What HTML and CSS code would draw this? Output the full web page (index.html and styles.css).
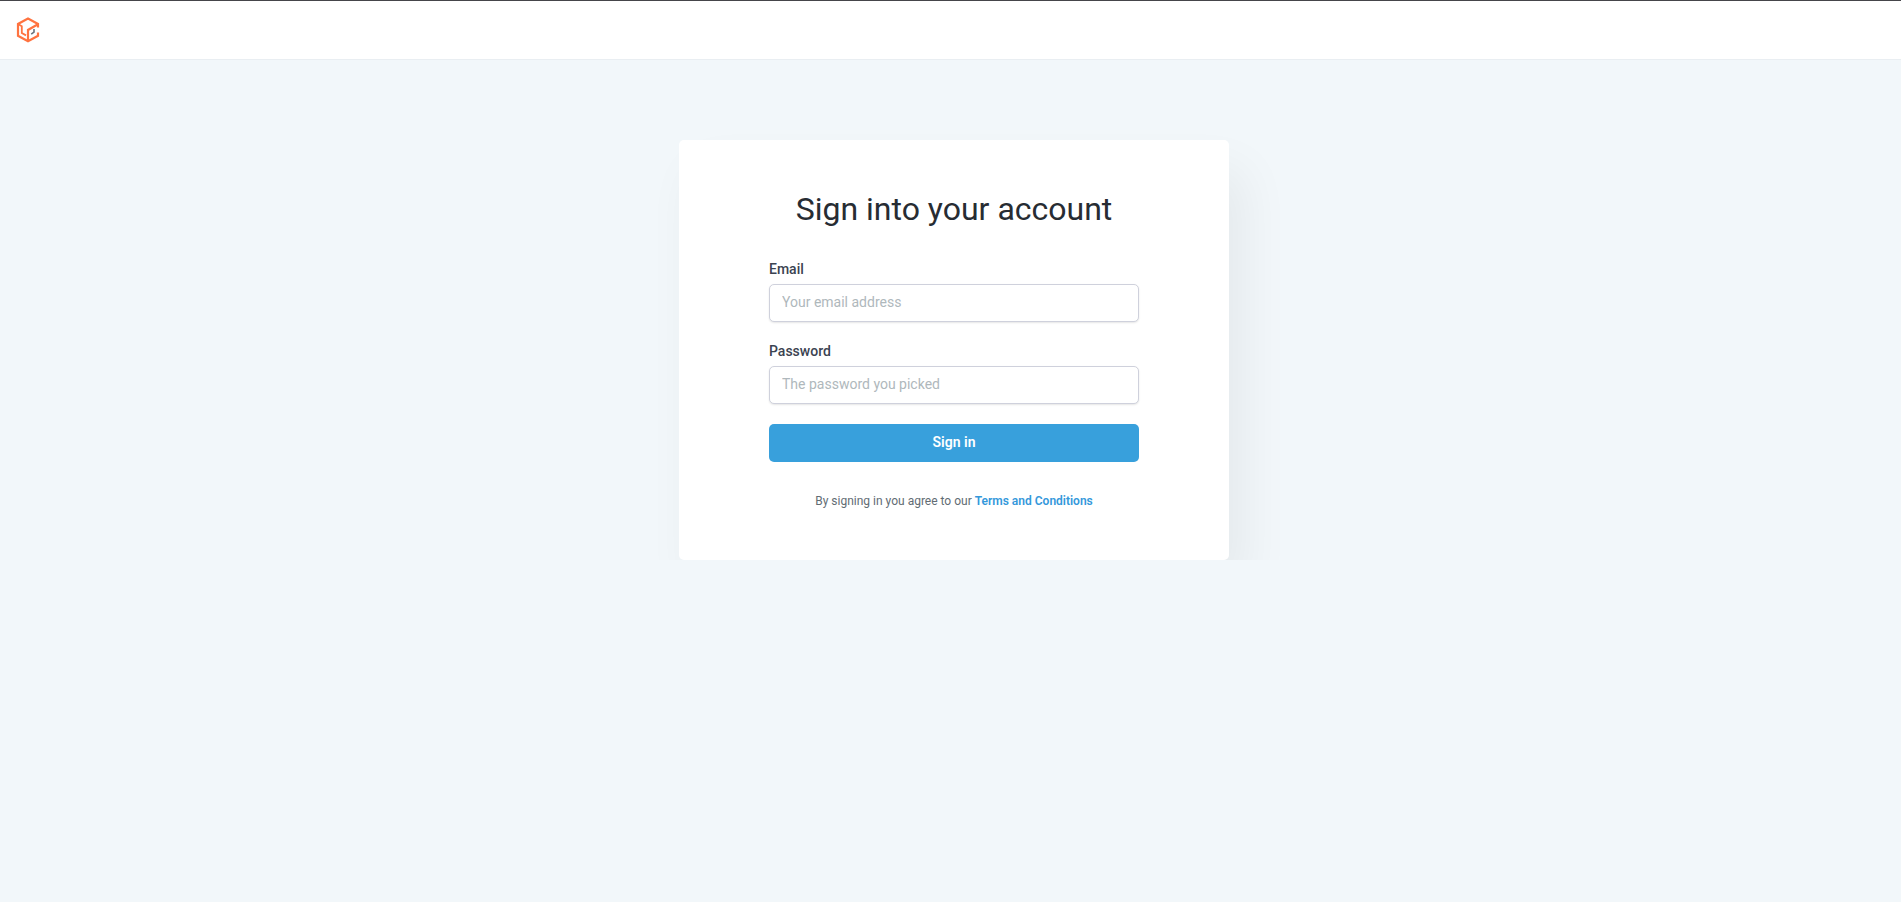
FILE: index.html
```
<!DOCTYPE html>
<html lang="en">
<head>
  <meta charset="UTF-8" />
  <meta name="viewport" content="width=device-width, initial-scale=1.0"/>
  <title>Sign in</title>
  <link rel="stylesheet" href="styles.css">
</head>
<body>
  <header class="navbar">
    <a href="#" class="logo" aria-label="Home">
      <svg width="24" height="28" viewBox="0 0 24 28" fill="none" stroke="#ff7340" stroke-width="2.2">
        <path d="M22 11.5V8L12 2.6L2 8V19.8L12 25.2L22 19.8V16.5" />
        <path d="M2 8L5.8 10.2V17L10 19.4" stroke-width="1.8" />
        <path d="M12 25V14L21.5 8.5" />
        <path d="M18 13V16.2L15.2 18.2" stroke="#6b747d" stroke-width="1.6" />
      </svg>
    </a>
  </header>

  <main class="page">
    <div class="card">
      <h1>Sign into your account</h1>
      <form>
        <div class="field">
          <label for="email">Email</label>
          <input type="email" id="email" placeholder="Your email address" />
        </div>
        <div class="field">
          <label for="password">Password</label>
          <input type="password" id="password" placeholder="The password you picked" />
        </div>
        <button type="submit">Sign in</button>
      </form>
      <p class="terms">By signing in you agree to our <a href="#">Terms and Conditions</a></p>
    </div>
  </main>
</body>
</html>
```

FILE: styles.css
```
* {
  box-sizing: border-box;
}

body {
  margin: 0;
  font-family: Roboto, sans-serif;
  font-size: 14px;
  line-height: 18px;
  color: #3b4351;
  background: #f2f7fa;
}

.navbar {
  display: flex;
  align-items: center;
  height: 60px;
  padding: 0 16px 1px;
  background: #fff;
  border-top: 1px solid #45454a;
  border-bottom: 1px solid #e9eef2;
}

.logo {
  display: flex;
}

/* clips the card shadow at the bottom */
.page {
  display: flex;
  justify-content: center;
  padding: 80px 0 0 7px;
  overflow: hidden;
}

.card {
  width: 100%;
  max-width: 550px;
  padding: 48px 90px 50px;
  background: #fff;
  border-radius: 5px;
  box-shadow: 15px 30px 50px rgba(0, 0, 0, 0.06);
}

h1 {
  margin: 0 0 30px;
  font-size: 32px;
  font-weight: 400;
  line-height: 42px;
  text-align: center;
  color: #272c33;
}

.field {
  margin-bottom: 20px;
}

label {
  display: block;
  margin-bottom: 6px;
  font-weight: 500;
}

input {
  display: block;
  width: 100%;
  height: 38px;
  padding: 8px 12px 10px;
  font: inherit;
  color: #3b4351;
  background: #fff;
  border: 1px solid #cfd1dc;
  border-radius: 5px;
  box-shadow: 0 1px 2px rgba(0, 0, 0, 0.1);
}

input::placeholder {
  color: #afb8bc;
}

button {
  display: block;
  width: 100%;
  height: 38px;
  padding: 8px 12px 10px;
  font: inherit;
  font-weight: 600;
  color: #fff;
  background: #38a0dc;
  border: none;
  border-radius: 5px;
  cursor: pointer;
}

.terms {
  margin: 30px 0 0;
  font-size: 12px;
  text-align: center;
  color: #626c74;
}

.terms a {
  font-weight: 600;
  color: #3498db;
  text-decoration: none;
}
```
